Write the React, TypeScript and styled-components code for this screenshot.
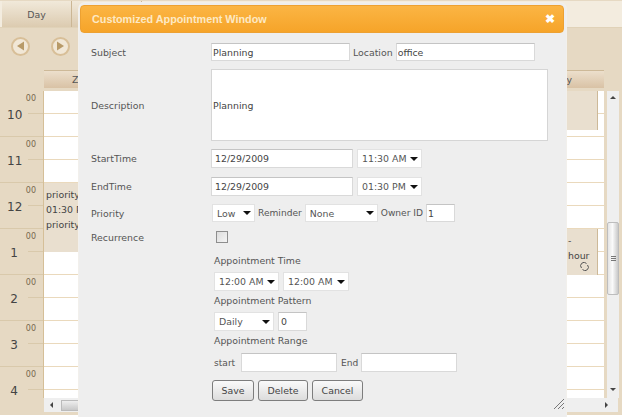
import React from "react";
import styled, { createGlobalStyle } from "styled-components";

const GlobalStyle = createGlobalStyle`
  html, body {
    margin: 0;
    padding: 0;
    background: #fff;
    font-family: "DejaVu Sans", Verdana, sans-serif;
  }
`;

const Page = styled.div`
  position: relative;
  width: 624px;
  height: 417px;
  overflow: hidden;
  background: #fff;
`;

const Calendar = styled.div`
  width: 622px;
  height: 415px;
  background: #e6d9c3;
`;

/* calendar behind the dialog */
const TabBar = styled.div`
  display: flex;
  box-sizing: border-box;
  height: 28px;
  padding-left: 2px;
  background: #f3ecdf;
  border-top: 1px solid #e6d9c3;
  border-bottom: 1px solid #e0d2b8;
`;

const Tab = styled.div`
  width: 69px;
  display: flex;
  align-items: center;
  justify-content: center;
  font-size: 9.4px;
  color: #555;
  background: linear-gradient(#f1e9da, #dccbb0);
  border-right: 1px solid #cbb694;
`;

const NavBar = styled.div`
  display: flex;
  align-items: center;
  gap: 21px;
  box-sizing: border-box;
  height: 42px;
  padding: 0 0 6px 11px;
`;

const NavButton = styled.div`
  width: 15px;
  height: 15px;
  border: 2px solid #d8bf98;
  border-radius: 50%;
  background: #f1e7d6;
  display: flex;
  align-items: center;
  justify-content: center;
`;

const ColumnHeader = styled.div`
  display: flex;
  justify-content: space-between;
  align-items: center;
  box-sizing: border-box;
  margin-left: 44px;
  width: 560px;
  height: 18px;
  padding: 0 32px 0 28px;
  font-size: 9.4px;
  color: #555;
  background: linear-gradient(#ecdfcc, #d9c2a5);
  border-top: 1px solid #cdb998;
`;

const CalendarBody = styled.div`
  display: flex;
  margin-top: 3px;
  height: 307px;
`;

const Gutter = styled.div`
  width: 44px;
  flex: none;
  overflow: hidden;
  border-right: 1px solid #d5bf98;
  box-sizing: border-box;
`;

const HourCell = styled.div`
  position: relative;
  box-sizing: border-box;
  height: 46px;
  border-bottom: 1px solid #d9c9ab;
  color: #555;
`;

const Minutes = styled.span`
  position: absolute;
  top: 3px;
  right: 7px;
  font-size: 8px;
  color: #77684e;
`;

const HourNumber = styled.span`
  position: absolute;
  left: 7px;
  top: 17px;
  width: 14px;
  text-align: center;
  font-size: 12px;
  color: #444;
`;

const HourTick = styled.span`
  position: absolute;
  left: 28px;
  right: 0;
  top: 22px;
  height: 1px;
  background: #d9c9ab;
`;

const DayColumn = styled.div`
  position: relative;
  width: 560px;
  flex: none;
  overflow: hidden;
`;

const HalfHour = styled.div`
  box-sizing: border-box;
  height: 23px;
  background: #fff;
  border-bottom: 1px solid #ead9bc;
`;

const EventBlock = styled.div<{ $top: number; $height: number; $left: number; $width: number }>`
  position: absolute;
  box-sizing: border-box;
  top: ${(p) => p.$top}px;
  left: ${(p) => p.$left}px;
  width: ${(p) => p.$width}px;
  height: ${(p) => p.$height}px;
  padding: 4px 2px;
  background: #e9dfcf;
  border-right: 1px solid #cdb998;
  font-size: 9.4px;
  line-height: 15px;
  color: #444;
  overflow: hidden;
  white-space: nowrap;
`;

const RecurIcon = styled.svg`
  position: absolute;
  right: 8px;
  bottom: 4px;
`;

const VScroll = styled.div`
  position: relative;
  width: 12px;
  margin-left: 3px;
  flex: none;
  background: #efefef;
`;

const VThumb = styled.div`
  position: absolute;
  top: 131px;
  left: 0;
  right: 0;
  height: 73px;
  background: linear-gradient(90deg, #e4e4e4, #fafafa 45%, #c9c9c9);
  border: 1px solid #bdbdbd;
  border-radius: 2px;
  box-sizing: border-box;
  display: flex;
  flex-direction: column;
  gap: 1px;
  align-items: center;
  justify-content: center;
`;

const Grip = styled.span`
  width: 5px;
  height: 1px;
  background: #777;
`;

const ScrollArrow = styled.span<{ $dir: "up" | "down" | "left" | "right" }>`
  position: absolute;
  width: 0;
  height: 0;
  border: 3px solid transparent;
  ${(p) => p.$dir === "up" && "top: 2px; left: 3px; border-bottom-color: #444;"}
  ${(p) => p.$dir === "down" && "bottom: 4px; left: 3px; border-top-color: #444;"}
  ${(p) => p.$dir === "left" && "left: 3px; top: 4px; border-right-color: #444;"}
  ${(p) => p.$dir === "right" && "right: 7px; top: 4px; border-left-color: #444;"}
`;

const HScroll = styled.div`
  position: relative;
  margin-left: 44px;
  width: 574px;
  height: 14px;
  background: #efefef;
`;

const HThumb = styled.div`
  position: absolute;
  left: 17px;
  top: 2px;
  bottom: 1px;
  width: 60px;
  background: linear-gradient(#eee, #c8c8c8);
  border: 1px solid #bbb;
  box-sizing: border-box;
`;

/* dialog */
const Dialog = styled.div`
  position: absolute;
  left: 79px;
  top: 3px;
  width: 487px;
  height: 414px;
  box-sizing: border-box;
  padding: 2px 1px 0;
  background: #eeeeee;
  border-radius: 6px 6px 0 0;
  box-shadow: 0 0 0 1px #f2f0ec;
  color: #555;
  font-size: 9.4px;
`;

const TitleBar = styled.div`
  display: flex;
  align-items: center;
  justify-content: space-between;
  box-sizing: border-box;
  height: 28px;
  width: 484px;
  padding: 0 8px 0 11px;
  border-radius: 4px;
  background: linear-gradient(#fbb544, #f6a429);
  border: 1px solid #eda132;
  color: #fde9c4;
  font-family: "Liberation Sans", Arial, sans-serif;
  font-size: 10.8px;
  font-weight: bold;
`;

const CloseMark = styled.span`
  color: #fff;
  font-size: 12px;
  font-weight: bold;
  line-height: 1;
`;

const Form = styled.div`
  padding-left: 11px;
`;

const Row = styled.div<{ $top: number; $height: number }>`
  display: grid;
  grid-template-columns: 120px 1fr;
  align-items: center;
  margin-top: ${(p) => p.$top}px;
  height: ${(p) => p.$height}px;
`;

const Label = styled.label`
  color: #555;
  font-size: 9.4px;
`;

const InlineLabel = styled.span<{ $w?: number }>`
  font-size: 9.1px;
  ${(p) => (p.$w ? `width: ${p.$w}px;` : "")}
`;

const Fields = styled.div<{ $gap?: number; $indent?: number }>`
  display: flex;
  align-items: center;
  gap: ${(p) => p.$gap ?? 3}px;
  margin-left: ${(p) => p.$indent ?? 0}px;
`;

const TextInput = styled.input<{ $w: number; $h?: number; $pad?: number }>`
  box-sizing: border-box;
  width: ${(p) => p.$w}px;
  height: ${(p) => p.$h ?? 19}px;
  padding: 0 ${(p) => p.$pad ?? 1}px;
  background: #fff;
  border: 1px solid #d9d9d9;
  border-top-color: #c4c4c4;
  border-radius: 0;
  outline: none;
  font-family: inherit;
  font-size: 9.4px;
  color: #444;
`;

const DescriptionBox = styled.div`
  box-sizing: border-box;
  width: 337px;
  height: 72px;
  display: flex;
  align-items: center;
  padding: 0 1px;
  background: #fff;
  border: 1px solid #d5d5d5;
  font-size: 9.4px;
  color: #444;
`;

const SelectWrap = styled.div<{ $w: number; $h?: number }>`
  position: relative;
  width: ${(p) => p.$w}px;
  height: ${(p) => p.$h ?? 19}px;
  &::after {
    content: "";
    position: absolute;
    right: 4px;
    top: 50%;
    margin-top: -2px;
    border: 4px solid transparent;
    border-bottom: none;
    border-top: 4px solid #111;
    pointer-events: none;
  }
`;

const NativeSelect = styled.select`
  appearance: none;
  box-sizing: border-box;
  width: 100%;
  height: 100%;
  padding: 0 0 0 4px;
  background: #fff;
  border: 1px solid #e2e2e2;
  border-radius: 0;
  outline: none;
  font-family: inherit;
  font-size: 9.4px;
  color: #555;
`;

const CheckBox = styled.div`
  width: 10px;
  height: 10px;
  margin-left: 5px;
  background: linear-gradient(135deg, #ddd, #f4f4f4);
  border: 1px solid #8e8e8e;
`;

const SectionTitle = styled.div<{ $top: number }>`
  margin-top: ${(p) => p.$top}px;
  margin-left: 123px;
  font-size: 9.4px;
  line-height: 12px;
  color: #555;
`;

const StackRow = styled.div<{ $top: number }>`
  display: flex;
  align-items: center;
  gap: 4px;
  margin-top: ${(p) => p.$top}px;
  margin-left: 123px;
`;

const ButtonRow = styled.div`
  display: flex;
  gap: 4px;
  margin-top: 8px;
  margin-left: 121px;
`;

const ActionButton = styled.button<{ $w: number }>`
  box-sizing: border-box;
  width: ${(p) => p.$w}px;
  height: 21px;
  padding: 0;
  background: linear-gradient(#fafafa, #dcdcdc);
  border: 1px solid #7d7d7d;
  border-radius: 3px;
  font-family: inherit;
  font-size: 9.4px;
  color: #444;
`;

const ResizeGrip = styled.svg`
  position: absolute;
  right: 1px;
  bottom: 7px;
`;

const hours = ["10", "11", "12", "1", "2", "3", "4"];

function Select({ w, h, value }: { w: number; h?: number; value: string }) {
  return (
    <SelectWrap $w={w} $h={h}>
      <NativeSelect defaultValue={value}>
        <option>{value}</option>
      </NativeSelect>
    </SelectWrap>
  );
}

function NavIcon({ back }: { back?: boolean }) {
  return (
    <svg width="9" height="10" viewBox="0 0 9 10">
      <path d={back ? "M8 0.5V9.5L1 5Z" : "M1 0.5V9.5L8 5Z"} fill="#b89a68" />
    </svg>
  );
}

export default function App() {
  return (
    <Page>
      <GlobalStyle />

      <Calendar>
        <TabBar>
          <Tab>Day</Tab>
          <Tab />
        </TabBar>
        <NavBar>
          <NavButton>
            <NavIcon back />
          </NavButton>
          <NavButton>
            <NavIcon />
          </NavButton>
        </NavBar>
        <ColumnHeader>
          <span>Z</span>
          <span>y</span>
        </ColumnHeader>
        <CalendarBody>
          <Gutter>
            {hours.map((hour) => (
              <HourCell key={hour}>
                <Minutes>00</Minutes>
                <HourNumber>{hour}</HourNumber>
                <HourTick />
              </HourCell>
            ))}
          </Gutter>
          <DayColumn>
            {Array.from({ length: 14 }, (_, i) => (
              <HalfHour key={i} />
            ))}
            <EventBlock $top={92} $height={69} $left={0} $width={36}>
              priority
              <br />
              01:30 PM
              <br />
              priority
            </EventBlock>
            <EventBlock $top={-2} $height={41} $left={522} $width={32} />
            <EventBlock $top={138} $height={46} $left={522} $width={32}>
              -
              <br />
              hour
              <RecurIcon width="9" height="9" viewBox="0 0 9 9">
                <path
                  d="M1.5 6A3.2 3.2 0 0 1 6.5 1.5M7.5 3A3.2 3.2 0 0 1 2.5 7.5"
                  fill="none"
                  stroke="#555"
                  strokeWidth="1"
                />
              </RecurIcon>
            </EventBlock>
          </DayColumn>
          <VScroll>
            <ScrollArrow $dir="up" />
            <VThumb>
              <Grip />
              <Grip />
              <Grip />
            </VThumb>
            <ScrollArrow $dir="down" />
          </VScroll>
        </CalendarBody>
        <HScroll>
          <ScrollArrow $dir="left" />
          <HThumb />
          <ScrollArrow $dir="right" />
        </HScroll>
      </Calendar>

      <Dialog>
        <TitleBar>
          <span>Customized Appointment Window</span>
          <CloseMark>✖</CloseMark>
        </TitleBar>
        <Form>
          <Row $top={10} $height={18}>
            <Label>Subject</Label>
            <Fields>
              <TextInput $w={139} $h={18} defaultValue="Planning" />
              <span>Location</span>
              <TextInput $w={139} $h={18} defaultValue="office" />
            </Fields>
          </Row>
          <Row $top={8} $height={72}>
            <Label>Description</Label>
            <DescriptionBox>Planning</DescriptionBox>
          </Row>
          <Row $top={8} $height={19}>
            <Label>StartTime</Label>
            <Fields $gap={4}>
              <TextInput $w={142} $pad={3} defaultValue="12/29/2009" />
              <Select w={65} value="11:30 AM" />
            </Fields>
          </Row>
          <Row $top={9} $height={19}>
            <Label>EndTime</Label>
            <Fields $gap={4}>
              <TextInput $w={142} $pad={3} defaultValue="12/29/2009" />
              <Select w={65} value="01:30 PM" />
            </Fields>
          </Row>
          <Row $top={8} $height={18}>
            <Label>Priority</Label>
            <Fields $indent={1}>
              <Select w={43} h={18} value="Low" />
              <InlineLabel>Reminder</InlineLabel>
              <Select w={73} h={18} value="None" />
              <InlineLabel>Owner ID</InlineLabel>
              <TextInput $w={29} $h={18} defaultValue="1" />
            </Fields>
          </Row>
          <Row $top={8} $height={14}>
            <Label>Recurrence</Label>
            <CheckBox />
          </Row>
          <SectionTitle $top={11}>Appointment Time</SectionTitle>
          <StackRow $top={5}>
            <Select w={65} value="12:00 AM" />
            <Select w={66} value="12:00 AM" />
          </StackRow>
          <SectionTitle $top={4}>Appointment Pattern</SectionTitle>
          <StackRow $top={5}>
            <Select w={60} value="Daily" />
            <TextInput $w={29} $pad={2} defaultValue="0" />
          </StackRow>
          <SectionTitle $top={4}>Appointment Range</SectionTitle>
          <StackRow $top={6}>
            <InlineLabel $w={23}>start</InlineLabel>
            <TextInput $w={96} />
            <InlineLabel $w={16}>End</InlineLabel>
            <TextInput $w={96} />
          </StackRow>
          <ButtonRow>
            <ActionButton $w={42}>Save</ActionButton>
            <ActionButton $w={50}>Delete</ActionButton>
            <ActionButton $w={51}>Cancel</ActionButton>
          </ButtonRow>
        </Form>
        <ResizeGrip width="12" height="12" viewBox="0 0 12 12">
          <path d="M1 11L11 1M5 11L11 5M9 11L11 9" stroke="#777" strokeWidth="1" />
        </ResizeGrip>
      </Dialog>
    </Page>
  );
}
